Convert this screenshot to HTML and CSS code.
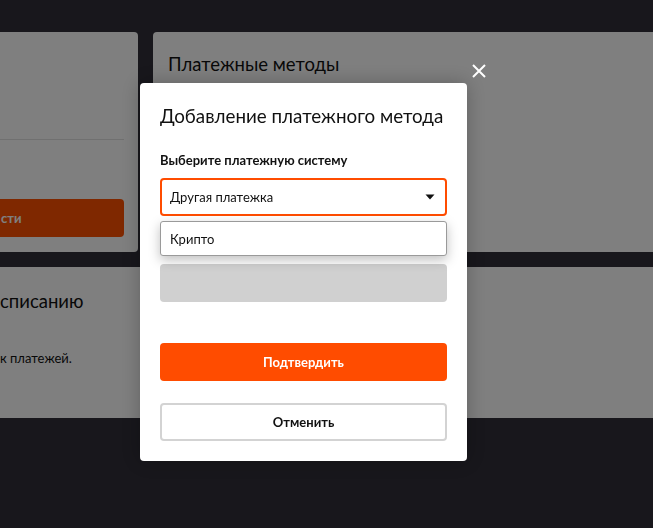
FILE: index.html
```html
<!DOCTYPE html>
<html lang="ru">
<head>
<meta charset="utf-8">
<title>Платежные методы</title>
<link rel="stylesheet" href="styles.css">
</head>
<body>
<div class="page">
  <div class="row">
    <section class="card card-left">
      <div class="left-top"></div>
      <div class="divider"></div>
      <button class="btn-dark">сти</button>
    </section>
    <section class="card card-right">
      <h2 class="card-title">Платежные методы</h2>
    </section>
  </div>
  <section class="card card-wide">
    <h2 class="card-title wide-title">списанию</h2>
    <p class="wide-text">к платежей.</p>
  </section>
</div>

<div class="backdrop">
  <button class="close" aria-label="Закрыть">
    <svg width="14" height="14" viewBox="0 0 14 14"><path d="M1 1 L13 13 M13 1 L1 13" stroke="#fff" stroke-width="2" fill="none"/></svg>
  </button>
  <div class="modal">
    <h1 class="modal-title">Добавление платежного метода</h1>
    <div class="label">Выберите платежную систему</div>
    <div class="select">
      <span>Другая платежка</span>
      <svg class="caret" width="10" height="6" viewBox="0 0 10 6"><path d="M0.5 0.5 H9.5 L5 5.5 Z" fill="#111"/></svg>
    </div>
    <div class="field-wrap">
      <div class="disabled-field"></div>
      <div class="dropdown"><div class="option">Крипто</div></div>
    </div>
    <button class="btn-primary">Подтвердить</button>
    <button class="btn-secondary">Отменить</button>
  </div>
</div>
</body>
</html>
```
FILE: styles.css
```css
* { box-sizing: border-box; }
html, body { margin: 0; padding: 0; }
body {
  background: #302e38;
  font-family: "Lato", "Noto Sans", sans-serif;
  color: #111;
  width: 653px;
  height: 528px;
  overflow: hidden;
}
.page {
  padding-top: 32px;
  display: flex;
  flex-direction: column;
  gap: 15px;
}
.row {
  display: flex;
  gap: 15px;
  height: 220px;
}
.card {
  background: #fff;
  border-radius: 4px;
}
.card-left {
  width: 138px;
  border-radius: 0 4px 4px 0;
  padding: 0 14px 0 0;
  display: flex;
  flex-direction: column;
}
.left-top { height: 107px; }
.divider { height: 1px; background: #e0e0e0; }
.btn-dark {
  margin-top: 59px;
  height: 38px;
  border: none;
  border-radius: 0 4px 4px 0;
  background: #ff5000;
  color: #fff;
  font-family: inherit;
  font-weight: 700;
  font-size: 13px;
  text-align: left;
  padding: 0 0 0 1px;
}
.card-right {
  flex: 1;
  border-radius: 4px 0 0 4px;
  padding: 21px 15px;
}
.card-title {
  margin: 0;
  font-size: 18.5px;
  font-weight: 400;
  color: #111;
  white-space: nowrap;
}
.card-wide {
  height: 151px;
  border-radius: 0;
  padding: 20px 0;
}
.wide-title { margin-top: 3px; }
.wide-text {
  margin: 38px 0 0;
  font-size: 13px;
}
.backdrop {
  position: fixed;
  inset: 0;
  background: rgba(0,0,0,0.5);
}
.close {
  position: absolute;
  left: 472px;
  top: 64px;
  width: 14px;
  height: 14px;
  padding: 0;
  border: none;
  background: none;
  display: block;
}
.close svg { display: block; }
.modal {
  position: absolute;
  left: 140px;
  top: 83px;
  width: 327px;
  background: #fff;
  border-radius: 4px;
  padding: 19px 20px 20px;
  display: flex;
  flex-direction: column;
  box-shadow: 0 0 20px rgba(0,0,0,0.25);
}
.modal > * { flex-shrink: 0; }
.modal-title {
  margin: 0;
  font-size: 18.8px;
  font-weight: 400;
  line-height: 28px;
  color: #111;
  white-space: nowrap;
}
.label {
  margin-top: 22px;
  font-size: 13px;
  font-weight: 700;
  line-height: 16px;
}
.select {
  margin-top: 10px;
  height: 38px;
  border: 2px solid #ff4c00;
  border-radius: 4px;
  display: flex;
  align-items: center;
  justify-content: space-between;
  padding: 0 10px 0 8px;
  font-size: 13px;
}
.caret { display: block; }
.field-wrap {
  position: relative;
  margin-top: 48px;
}
.disabled-field {
  height: 38px;
  background: #d0d0d0;
  border-radius: 4px;
}
.dropdown {
  position: absolute;
  left: 0;
  right: 0;
  top: -43px;
  height: 35px;
  background: #fff;
  border: 1px solid #9a9a9a;
  border-radius: 3px;
  box-shadow: 0 4px 12px rgba(0,0,0,0.25);
  display: flex;
  align-items: center;
  padding: 0 9px;
  font-size: 13px;
}
.btn-primary {
  margin-top: 41px;
  height: 38px;
  border: none;
  border-radius: 4px;
  background: #ff4c00;
  color: #fff;
  font-family: inherit;
  font-weight: 700;
  font-size: 13px;
}
.btn-secondary {
  margin-top: 22px;
  height: 38px;
  border: 2px solid #d3d3d3;
  border-radius: 4px;
  background: #fff;
  color: #111;
  font-family: inherit;
  font-weight: 700;
  font-size: 13px;
}
```
